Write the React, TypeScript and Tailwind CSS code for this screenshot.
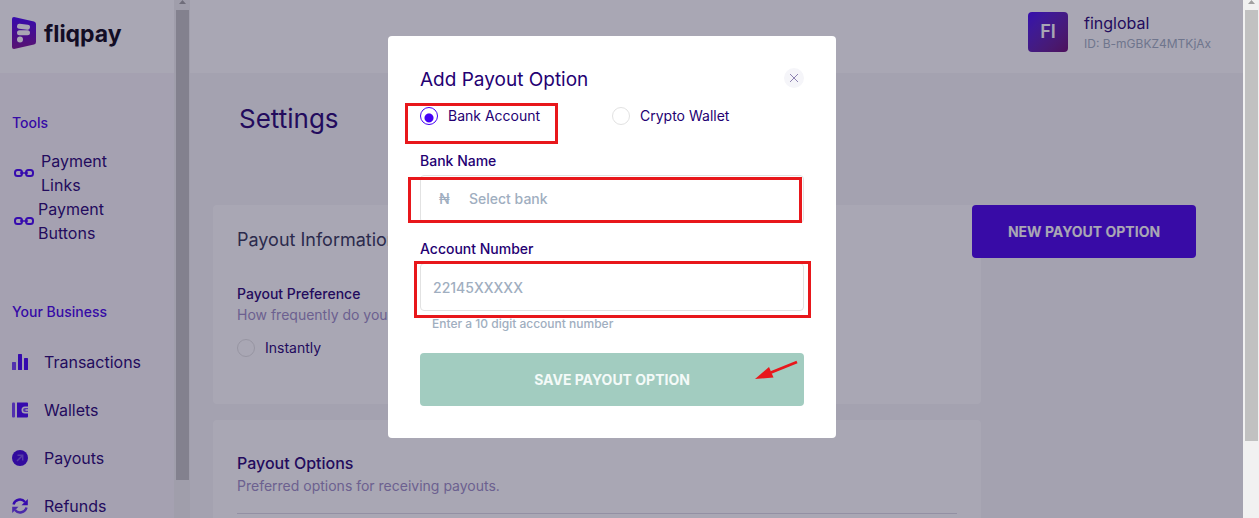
import { useState } from "react";

const BUSINESS_LINKS = [
    { label: "Transactions", icon: TransactionsIcon },
    { label: "Wallets", icon: WalletIcon },
    { label: "Payouts", icon: PayoutIcon },
    { label: "Refunds", icon: RefundIcon },
];

function LogoMark() {
    return (
        <svg width="24" height="32" viewBox="0 0 24 32" aria-hidden="true">
            <defs>
                <linearGradient id="logo" x1="0" y1="0" x2="0" y2="1">
                    <stop offset="0" stopColor="#4400f5" />
                    <stop offset="1" stopColor="#7c0e90" />
                </linearGradient>
            </defs>
            <path d="M2 0 L22 4.500 Q24 5 24 7 V25 Q24 27 22 27.500 L2 32 Q0 32 0 30 V2 Q0 0 2 0Z" fill="url(#logo)" />
            <path d="M7.500 9.300 L15.500 10.300 M7.500 15.800 H15.500" stroke="#fff" strokeWidth="5" strokeLinecap="round" />
            <circle cx="8" cy="22.500" r="3" fill="#fff" />
        </svg>
    );
}

function LinkIcon() {
    return (
        <svg width="20" height="8" viewBox="0 0 20 8" fill="none" stroke="#4400f5" strokeWidth="2" className="shrink-0" aria-hidden="true">
            <rect x="1" y="1" width="7" height="6" rx="2.500" />
            <rect x="12" y="1" width="7" height="6" rx="2.500" />
            <path d="M6 4h8" strokeWidth="1.500" />
        </svg>
    );
}

function TransactionsIcon() {
    return (
        <svg width="16" height="16" viewBox="0 0 16 16" fill="#4400f5" aria-hidden="true">
            <rect x="0" y="8" width="4" height="8" rx="0.500" opacity="0.75" />
            <rect x="6" y="0" width="4" height="16" rx="0.500" />
            <rect x="12" y="4" width="4" height="12" rx="0.500" />
        </svg>
    );
}

function WalletIcon() {
    return (
        <svg width="16" height="16" viewBox="0 0 16 16" fill="#4400f5" aria-hidden="true">
            <rect x="0" y="0.500" width="3" height="15" rx="1" opacity="0.75" />
            <path d="M5 0.500H15Q16 0.500 16 1.500V4.500H13A3.500 3.500 0 0 0 13 11.500H16V14.500Q16 15.500 15 15.500H5Z" />
            <path d="M16 6H13A2 2 0 0 0 13 10H16V8.800H13.500V7.200H16Z" opacity="0.7" />
        </svg>
    );
}

function PayoutIcon() {
    return (
        <svg width="16" height="16" viewBox="0 0 16 16" fill="none" aria-hidden="true">
            <circle cx="8" cy="8" r="8" fill="#3d00dc" />
            <path d="M5 11L10.500 5.500M5.500 5.300H10.700V10.500" stroke="#7a50e8" strokeWidth="1.500" />
        </svg>
    );
}

function RefundIcon() {
    return (
        <svg width="16" height="16" viewBox="0 0 16 16" fill="none" aria-hidden="true">
            <path d="M1.500 6.500A6.600 6.600 0 0 1 13 4" stroke="#4400f5" strokeWidth="2.400" />
            <path d="M15.800 1V7.200H9.500Z" fill="#4400f5" />
            <path d="M14.500 9.500A6.600 6.600 0 0 1 3 12" stroke="#6532ee" strokeWidth="2.400" />
            <path d="M0.200 15V8.800H6.500Z" fill="#6532ee" />
        </svg>
    );
}

function Scrollbar({ thumb }: { thumb: string }) {
    return (
        <div className="flex h-full w-4 shrink-0 flex-col items-center bg-[#f1f1f1]" aria-hidden="true">
            <svg width="7" height="10" viewBox="0 0 7 10" className="shrink-0">
                <path d="M0 4L3.500 0L7 4Z" fill="#a0a0a0" />
            </svg>
            <div className={`w-[13px] bg-[#c1c1c1] ${thumb}`} />
        </div>
    );
}

function Sidebar() {
    return (
        <aside className="flex h-full w-[190px] shrink-0">
            <div className="min-w-0 flex-1 bg-[#f9f6fb]">
                <a href="#" className="flex h-[73px] items-start gap-2 bg-white pt-[17px] pl-3 text-[#0a0414]">
                    <LogoMark />
                    <span className="text-[23px] leading-[34px] font-bold">fliqpay</span>
                </a>

                <nav className="pt-10 pl-3 text-base text-[#240072]">
                    <p className="text-sm font-medium text-[#4400e8]">Tools</p>
                    <div className="mt-4">
                        <a href="#" className="flex items-center gap-[7px] pl-[2px]">
                            <LinkIcon />
                            <span className="w-24">Payment Links</span>
                        </a>
                        <a href="#" className="flex items-center gap-1 pl-[2px]">
                            <LinkIcon />
                            <span className="w-24">Payment Buttons</span>
                        </a>
                    </div>

                    <p className="mt-[57px] text-sm font-medium text-[#4400e8]">Your Business</p>
                    <div className="mt-4">
                        {BUSINESS_LINKS.map(({ label, icon: Icon }) => (
                            <a key={label} href="#" className="flex h-12 items-center gap-4">
                                <Icon />
                                {label}
                            </a>
                        ))}
                    </div>
                </nav>
            </div>
            <Scrollbar thumb="h-[470px]" />
        </aside>
    );
}

function Header() {
    return (
        <header className="flex h-[73px] items-start justify-end gap-4 bg-white pt-3 pr-8">
            <div className="flex size-10 items-center justify-center rounded bg-linear-to-br from-[#4400f5] to-[#6a0670] text-lg font-semibold text-white">
                FI
            </div>
            <div className="w-[127px] whitespace-nowrap">
                <p className="text-base leading-[22px] text-[#240072]">finglobal</p>
                <p className="text-xs leading-5 text-[#a0aec0]">ID: B-mGBKZ4MTKjAx</p>
            </div>
        </header>
    );
}

const RADIO =
    "size-[18px] shrink-0 appearance-none rounded-full border border-[#e2e2e2] checked:border-[#4400f5] checked:bg-[radial-gradient(circle_at_50%_62%,#4400f5_4px,transparent_5px)]";

function Settings() {
    return (
        <main className="pt-7 pr-[47px] pl-[23px] text-[#240072]">
            <h1 className="pl-[26px] text-[26px] leading-9">Settings</h1>

            <div className="mt-[68px] flex items-start">
                <div className="flex min-w-0 flex-1 flex-col gap-4">
                    <section className="h-[199px] rounded bg-white px-6 pt-[21px]">
                        <h2 className="text-lg leading-7 text-[#323456]">Payout Information</h2>
                        <h3 className="mt-[30px] text-sm font-medium">Payout Preference</h3>
                        <p className="text-sm leading-[22px] text-[#9b8cc4]">How frequently do you pay?</p>
                        <label className="mt-3 flex items-center gap-[10px] text-sm">
                            <input type="radio" name="frequency" className={RADIO} />
                            Instantly
                        </label>
                    </section>

                    <section className="rounded bg-white px-6 pt-[31px] pb-10">
                        <h2 className="text-base font-medium">Payout Options</h2>
                        <p className="text-sm leading-[22px] text-[#9b8cc4]">Preferred options for receiving payouts.</p>
                        <hr className="mt-4 border-[#dcd9e4]" />
                    </section>
                </div>
                <button
                    type="button"
                    className="relative -ml-[9px] h-[53px] w-56 shrink-0 rounded bg-[#4700e8] text-sm font-bold text-white"
                >
                    NEW PAYOUT OPTION
                </button>
            </div>
        </main>
    );
}

// Red boxes drawn over the parts of the form that need attention
function Highlight({ className }: { className: string }) {
    return <div className={`pointer-events-none absolute border-3 border-[#e8171b] ${className}`} />;
}

function PayoutModal() {
    const [method, setMethod] = useState("bank");

    return (
        <form
            role="dialog"
            aria-labelledby="modal-title"
            onSubmit={e => e.preventDefault()}
            className="relative w-full max-w-md rounded bg-white px-8 pt-7 pb-8 text-sm text-[#240072]"
        >
            <div className="flex items-start justify-between">
                <h2 id="modal-title" className="text-[19px] leading-8">Add Payout Option</h2>
                <button type="button" aria-label="Close" className="mt-1 flex size-5 items-center justify-center rounded-full bg-[#f5f5f9]">
                    <svg width="8" height="8" viewBox="0 0 8 8" stroke="#7466a0" strokeWidth="0.800" aria-hidden="true">
                        <path d="M0 0L8 8M8 0L0 8" />
                    </svg>
                </button>
            </div>

            <div className="mt-[10px] grid grid-cols-2">
                <label className="flex items-center gap-[10px]">
                    <input type="radio" name="method" checked={method === "bank"} onChange={() => setMethod("bank")} className={RADIO} />
                    Bank Account
                </label>
                <label className="flex items-center gap-[10px]">
                    <input type="radio" name="method" checked={method === "crypto"} onChange={() => setMethod("crypto")} className={RADIO} />
                    Crypto Wallet
                </label>
            </div>

            <label htmlFor="bank" className="mt-[25px] block font-medium">Bank Name</label>
            <div className="mt-1 flex h-12 items-center rounded border border-[#e2e2e2] font-medium text-[#a0aec0]">
                <span className="w-12 pl-[18px]">₦</span>
                <select id="bank" className="h-full flex-1 appearance-none bg-transparent outline-none">
                    <option>Select bank</option>
                </select>
            </div>

            <label htmlFor="account" className="mt-4 block font-medium">Account Number</label>
            <input
                id="account"
                placeholder="22145XXXXX"
                className="mt-1 block h-12 w-full rounded border border-[#e2e2e2] px-3 font-medium outline-none placeholder:text-[#a0aec0]"
            />
            <p className="mt-1 pl-3 text-xs leading-[18px] font-medium text-[#a0aec0]">Enter a 10 digit account number</p>

            <button type="submit" className="mt-5 block h-[53px] w-full rounded bg-[#a2ccc0] font-bold text-[#f4faf8]">
                SAVE PAYOUT OPTION
            </button>

            <Highlight className="top-[67px] left-[17px] h-[41px] w-[153px]" />
            <Highlight className="top-[141px] left-5 h-[46px] w-[394px]" />
            <Highlight className="top-[225px] left-[26px] h-[57px] w-[397px]" />
            <svg width="44" height="20" viewBox="0 0 44 20" className="pointer-events-none absolute top-[324px] right-[37px]" aria-hidden="true">
                <path d="M16 12.500L42 2" stroke="#e8171b" strokeWidth="2.800" />
                <path d="M0 19L14 7L18.500 17.500Z" fill="#e8171b" />
            </svg>
        </form>
    );
}

export default function App() {
    return (
        <div className="flex h-screen overflow-hidden bg-[#f7f7f9] font-[Inter,'Liberation_Sans',sans-serif]">
            <div className="relative flex min-w-0 flex-1">
                <Sidebar />
                <div className="min-w-0 flex-1 overflow-hidden">
                    <Header />
                    <Settings />
                </div>
                <div className="absolute inset-0 flex items-start justify-center bg-[#211c3e]/39 pt-9 pr-[19px]">
                    <PayoutModal />
                </div>
            </div>
            <Scrollbar thumb="h-[431px]" />
        </div>
    );
}
